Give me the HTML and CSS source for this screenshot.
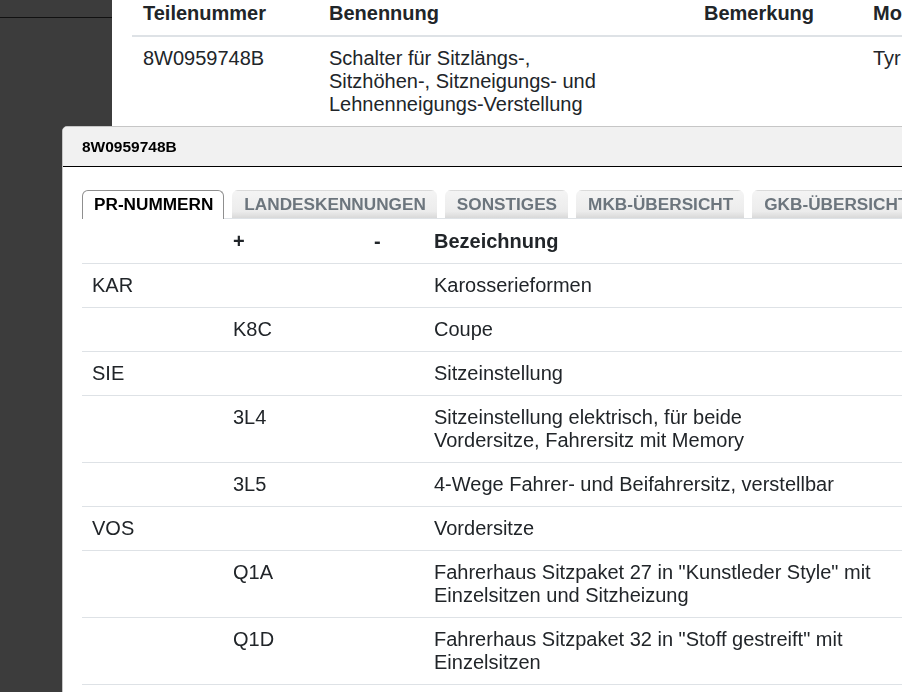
FILE: index.html
```html
<!DOCTYPE html>
<html lang="de">
<head>
    <meta charset="UTF-8">
    <meta name="viewport" content="width=device-width, initial-scale=1.0">
    <title>Teilekatalog</title>
    <link rel="stylesheet" href="styles.css">
</head>
<body>
    <div class="layout">
        <!-- linke Navigation -->
        <aside class="sidebar">
            <div class="sidebar-top"></div>
        </aside>

        <!-- Teileliste -->
        <main class="content">
            <table class="parts">
                <thead>
                    <tr>
                        <th class="col-nr">Teilenummer</th>
                        <th class="col-name">Benennung</th>
                        <th class="col-note">Bemerkung</th>
                        <th>Modell</th>
                    </tr>
                </thead>
                <tbody>
                    <tr>
                        <td>8W0959748B</td>
                        <td><div class="name">Schalter für Sitzlängs-, Sitzhöhen-, Sitzneigungs- und Lehnenneigungs-Verstellung</div></td>
                        <td></td>
                        <td>Tyr</td>
                    </tr>
                </tbody>
            </table>
        </main>
    </div>

    <!-- Detaildialog -->
    <div class="modal">
        <div class="modal-header">
            <h2>8W0959748B</h2>
        </div>
        <div class="modal-body">
            <ul class="tabs">
                <li class="tab active">PR-NUMMERN</li>
                <li class="tab">LANDESKENNUNGEN</li>
                <li class="tab">SONSTIGES</li>
                <li class="tab">MKB-ÜBERSICHT</li>
                <li class="tab">GKB-ÜBERSICHT</li>
            </ul>

            <table class="pr-table">
                <thead>
                    <tr>
                        <th class="c-family"></th>
                        <th class="c-plus">+</th>
                        <th class="c-minus">-</th>
                        <th>Bezeichnung</th>
                    </tr>
                </thead>
                <tbody>
                    <tr><td>KAR</td><td></td><td></td><td>Karosserieformen</td></tr>
                    <tr><td></td><td>K8C</td><td></td><td>Coupe</td></tr>
                    <tr><td>SIE</td><td></td><td></td><td>Sitzeinstellung</td></tr>
                    <tr><td></td><td>3L4</td><td></td><td>Sitzeinstellung elektrisch, für beide<br>Vordersitze, Fahrersitz mit Memory</td></tr>
                    <tr><td></td><td>3L5</td><td></td><td>4-Wege Fahrer- und Beifahrersitz, verstellbar</td></tr>
                    <tr><td>VOS</td><td></td><td></td><td>Vordersitze</td></tr>
                    <tr><td></td><td>Q1A</td><td></td><td>Fahrerhaus Sitzpaket 27 in "Kunstleder Style" mit Einzelsitzen und Sitzheizung</td></tr>
                    <tr><td></td><td>Q1D</td><td></td><td>Fahrerhaus Sitzpaket 32 in "Stoff gestreift" mit Einzelsitzen</td></tr>
                </tbody>
            </table>
        </div>
    </div>
</body>
</html>
```

FILE: styles.css
```css
/* Grundlayout */
html, body {
    margin: 0;
    height: 100%;
    overflow: hidden;
}

body {
    font-family: "Liberation Sans", Arial, sans-serif;
    color: #212529;
    background-color: #fff;
}

.layout {
    display: flex;
    height: 100%;
}

/* Seitenleiste */
.sidebar {
    flex: 0 0 112px;
    background-color: #3c3c3c;
}

.sidebar-top {
    height: 17px;
    border-bottom: 1px solid #111;
}

/* Teileliste */
.content {
    flex: 1;
    padding-left: 20px;
    overflow: hidden;
}

.parts {
    width: 1000px;
    margin-top: -8px;
    border-collapse: collapse;
    table-layout: fixed;
    font-size: 20px;
}

.parts th,
.parts td {
    text-align: left;
    vertical-align: top;
    padding: 10px 11px;
}

.parts th {
    border-bottom: 2px solid #dee2e6;
}

.parts .col-nr { width: 164px; }
.parts .col-name { width: 353px; }
.parts .col-note { width: 147px; }

.parts .name {
    width: 280px;
}

/* Dialog */
.modal {
    position: fixed;
    top: 126px;
    left: 62px;
    width: 900px;
    height: 700px;
    background-color: #fff;
    border: 1px solid #c6c6c6;
    border-radius: 5px 5px 0 0;
    overflow: hidden;
}

.modal-header {
    height: 39px;
    padding: 0 19px;
    display: flex;
    align-items: center;
    background-color: #f1f1f1;
    border-bottom: 1px solid #000;
}

.modal-header h2 {
    margin: 0;
    font-size: 15.5px;
    font-weight: bold;
    color: #000;
}

.modal-body {
    padding: 23px 19px 0;
}

/* Reiter */
.tabs {
    display: flex;
    gap: 8px;
    margin: 0;
    padding: 0;
    list-style: none;
    border-bottom: 1px solid #dee2e6;
    white-space: nowrap;
}

.tab {
    padding: 3px 10px 3px 11px;
    font-size: 17.2px;
    font-weight: bold;
    color: #6c757d;
    border: 1px solid transparent;
    border-bottom: none;
    border-radius: 6px 6px 0 0;
    background: linear-gradient(#f4f4f4, #ececec 75%, #d9d9d9);
}

.tab.active {
    color: #000;
    background: #fff;
    border-color: #8f8f8f;
    margin-bottom: -1px;
    padding-bottom: 4px;
}

/* PR-Nummern-Tabelle */
.pr-table {
    width: 860px;
    margin-top: 1px;
    border-collapse: collapse;
    table-layout: fixed;
    font-size: 20px;
}

.pr-table th,
.pr-table td {
    text-align: left;
    vertical-align: top;
    padding: 10px;
    border-bottom: 1px solid #dee2e6;
}

.pr-table .c-family { width: 121px; }
.pr-table .c-plus { width: 121px; }
.pr-table .c-minus { width: 40px; }
```
